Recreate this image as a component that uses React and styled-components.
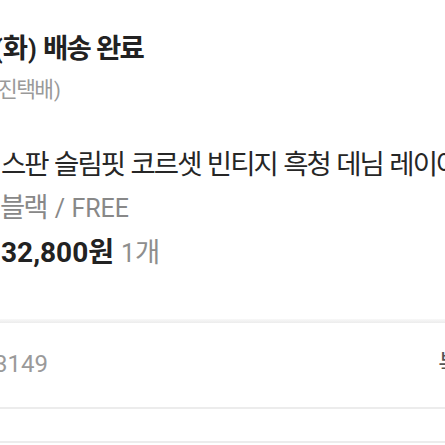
import React from 'react';
import styled, { createGlobalStyle } from 'styled-components';

const GlobalStyle = createGlobalStyle`
  html, body {
    margin: 0;
    padding: 0;
    background: #ffffff;
    overflow: hidden;
  }
  body {
    font-family: Roboto, "Noto Sans CJK KR", sans-serif;
  }
`;

const Page = styled.div`
  width: 445px;
  height: 445px;
  overflow: hidden;
  display: flex;
  flex-direction: column;
`;

// Hangul runs: a little larger and tighter, closer to the phone font in the capture
const Ko = styled.span`
  font-size: 1.1em;
  line-height: 0;
  letter-spacing: -0.07em;
  word-spacing: 0.05em;
  margin-right: 0.07em;
`;

const StatusBlock = styled.div`
  padding-top: 33px;
  display: flex;
  flex-direction: column;
`;

const StatusTitle = styled.div`
  margin-left: ${(props) => props.shift}px;
  font-size: 25px;
  line-height: 34px;
  font-weight: 700;
  color: #222222;
  white-space: nowrap;
`;

const Carrier = styled.div`
  margin-top: 11px;
  margin-left: ${(props) => props.shift}px;
  font-size: 19.5px;
  line-height: 26px;
  color: #9a9a9a;
  white-space: nowrap;
`;

const ProductBlock = styled.div`
  margin-top: 45px;
  display: flex;
  flex-direction: column;
`;

const ProductName = styled.div`
  padding-left: 1px;
  font-size: 25px;
  line-height: 34px;
  color: #262626;
  white-space: nowrap;
  overflow: hidden;
`;

const OptionText = styled.div`
  margin-top: 11px;
  font-size: 25px;
  line-height: 30px;
  color: #888888;
  white-space: nowrap;
`;

const PriceRow = styled.div`
  margin-top: 12px;
  display: flex;
  align-items: baseline;
  gap: 7px;
  padding-left: 1px;
  line-height: 34px;
  white-space: nowrap;
`;

const Price = styled.span`
  font-size: 28px;
  font-weight: 700;
  color: #222222;
`;

const Quantity = styled.span`
  font-size: 25px;
  color: #8e8e8e;
`;

const SectionGap = styled.div`
  margin-top: 48px;
  height: 4px;
  background: linear-gradient(#f8f8f8, #ececec);
  flex-shrink: 0;
`;

const InfoRow = styled.div`
  height: 86px;
  flex-shrink: 0;
  display: flex;
  align-items: center;
  justify-content: space-between;
  padding-bottom: 2px;
  box-sizing: border-box;
  border-bottom: 2px solid #ececec;
  overflow: hidden;
`;

const InfoValue = styled.span`
  margin-left: -6px;
  font-size: 24px;
  color: #9a9a9a;
  white-space: nowrap;
`;

const CopyButton = styled.span`
  margin-right: -36px;
  font-size: 22px;
  color: #555555;
  white-space: nowrap;
`;

const EmptyRow = styled.div`
  height: 32px;
  flex-shrink: 0;
  border-bottom: 2px solid #ececec;
`;

export default function App() {
  return (
    <Page>
      <GlobalStyle />
      <StatusBlock>
        <StatusTitle shift={-6}>
          (<Ko>화</Ko>) <Ko>배송 완료</Ko>
        </StatusTitle>
        <Carrier shift={-27}>
          (<Ko>한진택배</Ko>)
        </Carrier>
      </StatusBlock>
      <ProductBlock>
        <ProductName>
          <Ko>스판 슬림핏 코르셋 빈티지 흑청 데님 레이어드 스커트</Ko>
        </ProductName>
        <OptionText>
          <Ko>블랙</Ko> / FREE
        </OptionText>
        <PriceRow>
          <Price>32,800원</Price>
          <Quantity>
            1<Ko>개</Ko>
          </Quantity>
        </PriceRow>
      </ProductBlock>
      <SectionGap />
      <InfoRow>
        <InfoValue>3149</InfoValue>
        <CopyButton>
          <Ko>복사</Ko>
        </CopyButton>
      </InfoRow>
      <EmptyRow />
    </Page>
  );
}
